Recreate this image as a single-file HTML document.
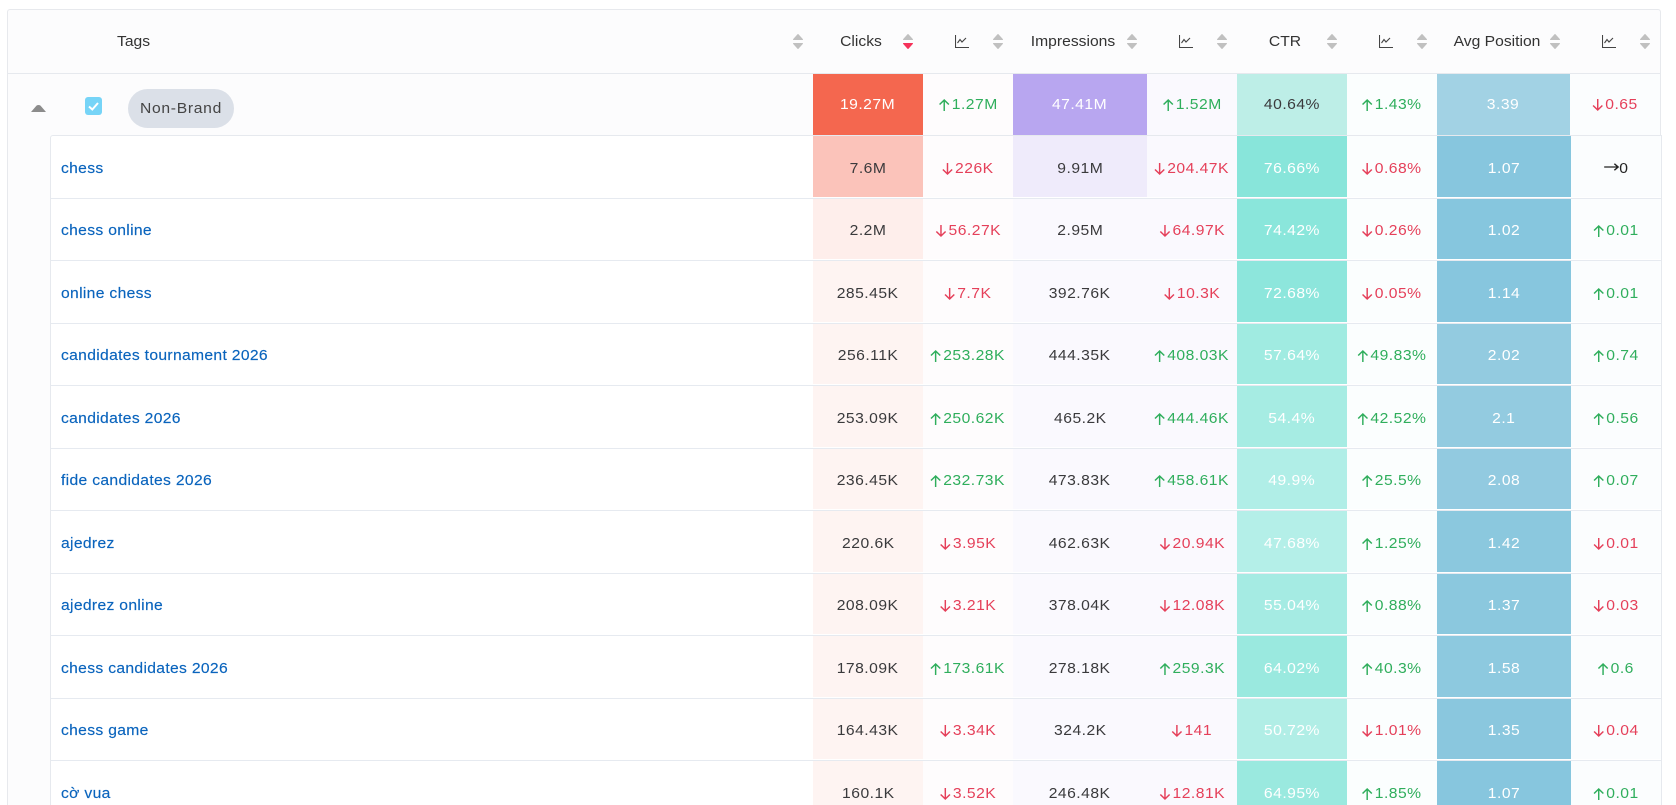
<!DOCTYPE html>
<html lang="en"><head><meta charset="utf-8"><title>Tags table</title>
<style>
html,body{margin:0;padding:0;background:#fff;width:1676px;height:805px;overflow:hidden}
body{position:relative;font-family:"Liberation Sans",sans-serif;font-size:14.5px;color:#3a3a3c}
.abs,.hd,.r,.c{position:absolute}
#wrap{left:7px;top:9px;width:1652px;height:795px;border:1px solid #e7e9ed;border-bottom:0;border-radius:3px 3px 0 0;background:#fcfcfd;box-sizing:content-box}
.hl{left:8px;top:73px;width:1652px;height:1px;background:#e6e9ee}
.hd{top:31px;height:22px;line-height:22px;color:#333;transform:translateX(-50%) scaleX(1.08);white-space:nowrap}
.so,.ch{position:absolute}
.so path{stroke-linejoin:round;stroke-width:1}
.c{top:0;bottom:1px;display:flex;align-items:center;justify-content:center;white-space:nowrap}
.t{display:inline-flex;align-items:center;letter-spacing:.45px;transform:scaleX(1.08)}
.r .t{transform:translateY(2px) scaleX(1.08)}
.w{color:#fff}.g{color:#2fae5c}.e{color:#e5405a}
.t svg{margin-right:2px;fill:none;stroke:currentColor;stroke-width:1.35;flex:none}
.c1{left:763px;width:110px}.c2{left:873px;width:90px;background:#fefcfd}.c3{left:963px;width:134px}.c4{left:1097px;width:90px;background:#faf9fe}
.c5{left:1187px;width:110px}.c6{left:1297px;width:90px;background:#fbfefe}.c7{left:1387px;width:134px}.c8{left:1521px;width:90px;background:#fbfdfe}
#inner{left:50px;top:135px;width:1612px;height:670px;background:#fff;border:1px solid #e6e9ee;border-bottom:0;border-radius:3px 0 0 0;box-sizing:border-box;overflow:hidden}
.r{left:-1px;width:1612px;border-bottom:1px solid #e6eaf0;box-sizing:border-box}
.l{position:absolute;left:11px;top:0;bottom:1px;display:flex;align-items:center;color:#0a64bd;letter-spacing:.3px;transform:translateY(2px) scaleX(1.08);transform-origin:left center;-webkit-text-stroke:.15px #0a64bd;white-space:nowrap}
#gr{left:50px;top:74px;width:1611px;height:61px}
#gr .c{bottom:0}
</style></head><body>
<div class="abs" id="wrap"></div>
<div class="abs hl"></div>

<div class="hd" style="left:117px;transform:scaleX(1.08);transform-origin:left center">Tags</div>
<div class="hd" style="left:861px">Clicks</div>
<div class="hd" style="left:1073px">Impressions</div>
<div class="hd" style="left:1285px">CTR</div>
<div class="hd" style="left:1497px">Avg Position</div>

<svg class="so" style="left:793px;top:33px" width="10" height="17" viewBox="0 0 10 17"><path fill="#c0c0c0" stroke="#c0c0c0" d="M5 1.500 9.500 6.500H.5zM.5 10.500H9.500L5 15.500z"/></svg>
<svg class="so" style="left:903px;top:33px" width="10" height="17" viewBox="0 0 10 17"><path fill="#c0c0c0" stroke="#c0c0c0" d="M5 1.500 9.500 6.500H.5z"/><path fill="#f5325a" stroke="#f5325a" d="M.5 10.500H9.500L5 15.500z"/></svg>
<svg class="so" style="left:993px;top:33px" width="10" height="17" viewBox="0 0 10 17"><path fill="#c0c0c0" stroke="#c0c0c0" d="M5 1.500 9.500 6.500H.5zM.5 10.500H9.500L5 15.500z"/></svg>
<svg class="so" style="left:1127px;top:33px" width="10" height="17" viewBox="0 0 10 17"><path fill="#c0c0c0" stroke="#c0c0c0" d="M5 1.500 9.500 6.500H.5zM.5 10.500H9.500L5 15.500z"/></svg>
<svg class="so" style="left:1217px;top:33px" width="10" height="17" viewBox="0 0 10 17"><path fill="#c0c0c0" stroke="#c0c0c0" d="M5 1.500 9.500 6.500H.5zM.5 10.500H9.500L5 15.500z"/></svg>
<svg class="so" style="left:1327px;top:33px" width="10" height="17" viewBox="0 0 10 17"><path fill="#c0c0c0" stroke="#c0c0c0" d="M5 1.500 9.500 6.500H.5zM.5 10.500H9.500L5 15.500z"/></svg>
<svg class="so" style="left:1417px;top:33px" width="10" height="17" viewBox="0 0 10 17"><path fill="#c0c0c0" stroke="#c0c0c0" d="M5 1.500 9.500 6.500H.5zM.5 10.500H9.500L5 15.500z"/></svg>
<svg class="so" style="left:1550px;top:33px" width="10" height="17" viewBox="0 0 10 17"><path fill="#c0c0c0" stroke="#c0c0c0" d="M5 1.500 9.500 6.500H.5zM.5 10.500H9.500L5 15.500z"/></svg>
<svg class="so" style="left:1640px;top:33px" width="10" height="17" viewBox="0 0 10 17"><path fill="#c0c0c0" stroke="#c0c0c0" d="M5 1.500 9.500 6.500H.5zM.5 10.500H9.500L5 15.500z"/></svg>

<svg class="ch" style="left:955px;top:35px" width="14" height="13" viewBox="0 0 14 13" fill="none" stroke="#444" stroke-width="1.1"><path d="M.5 0V12.500H14M2.500 8 5 4.500 7 7 11 3"/></svg>
<svg class="ch" style="left:1179px;top:35px" width="14" height="13" viewBox="0 0 14 13" fill="none" stroke="#444" stroke-width="1.1"><path d="M.5 0V12.500H14M2.500 8 5 4.500 7 7 11 3"/></svg>
<svg class="ch" style="left:1379px;top:35px" width="14" height="13" viewBox="0 0 14 13" fill="none" stroke="#444" stroke-width="1.1"><path d="M.5 0V12.500H14M2.500 8 5 4.500 7 7 11 3"/></svg>
<svg class="ch" style="left:1602px;top:35px" width="14" height="13" viewBox="0 0 14 13" fill="none" stroke="#444" stroke-width="1.1"><path d="M.5 0V12.500H14M2.500 8 5 4.500 7 7 11 3"/></svg>

<svg class="abs" style="left:31px;top:105px" width="15" height="7" viewBox="0 0 15 7"><path fill="#8c8c8c" d="M5.500 .6Q7.500-.6 9.500 .6L15 7H0z"/></svg>
<div class="abs" style="left:85px;top:97px;width:17px;height:18px;background:#76d4f7;border-radius:3px"></div>
<svg class="abs" style="left:85px;top:97px" width="17" height="18" viewBox="0 0 17 18" fill="none" stroke="#fff" stroke-width="2"><path d="M4 9.500 7.300 12.500 13 6"/></svg>
<div class="abs" style="left:128px;top:89px;width:106px;height:39px;border-radius:20px;background:#dbe0e8;display:flex;align-items:center;justify-content:center;color:#444"><span class="t" style="letter-spacing:.65px">Non-Brand</span></div>

<div class="abs" id="gr">
<div class="c c1 w" style="background:#f4674f"><span class="t">19.27M</span></div>
<div class="c c2 g"><span class="t"><svg width="10" height="12" viewBox="0 0 10 12"><path d="M5 12V1M.7 5.500 5 1l4.300 4.500"/></svg>1.27M</span></div>
<div class="c c3 w" style="background:#b8a6f0"><span class="t">47.41M</span></div>
<div class="c c4 g"><span class="t"><svg width="10" height="12" viewBox="0 0 10 12"><path d="M5 12V1M.7 5.500 5 1l4.300 4.500"/></svg>1.52M</span></div>
<div class="c c5" style="background:#bdeee7"><span class="t">40.64%</span></div>
<div class="c c6 g"><span class="t"><svg width="10" height="12" viewBox="0 0 10 12"><path d="M5 12V1M.7 5.500 5 1l4.300 4.500"/></svg>1.43%</span></div>
<div class="c c7 w" style="background:#a2d2e4;width:133px"><span class="t">3.39</span></div>
<div class="c c8 e" style="left:1520px"><span class="t"><svg width="10" height="12" viewBox="0 0 10 12"><path d="M5 0V11M.7 6.500 5 11l4.300-4.500"/></svg>0.65</span></div>
</div>

<div class="abs" id="inner">

<div class="r" style="top:0;height:63px"><div class="l">chess</div>
<div class="c c1" style="background:#fbc3ba"><span class="t">7.6M</span></div>
<div class="c c2 e"><span class="t"><svg width="10" height="12" viewBox="0 0 10 12"><path d="M5 0V11M.7 6.500 5 11l4.300-4.500"/></svg>226K</span></div>
<div class="c c3" style="background:#efebfb"><span class="t">9.91M</span></div>
<div class="c c4 e"><span class="t"><svg width="10" height="12" viewBox="0 0 10 12"><path d="M5 0V11M.7 6.500 5 11l4.300-4.500"/></svg>204.47K</span></div>
<div class="c c5 w" style="background:#88e5da"><span class="t">76.66%</span></div>
<div class="c c6 e"><span class="t"><svg width="10" height="12" viewBox="0 0 10 12"><path d="M5 0V11M.7 6.500 5 11l4.300-4.500"/></svg>0.68%</span></div>
<div class="c c7 w" style="background:#87c6de"><span class="t">1.07</span></div>
<div class="c c8" style="color:#222"><span class="t"><svg width="14" height="12" viewBox="0 0 14 12" style="margin-right:0;margin-top:-3px"><path d="M0 6H13M9.500 2.800 13 6l-3.500 3.200"/></svg>0</span></div>
</div>

<div class="r" style="top:63px;height:62px"><div class="l">chess online</div>
<div class="c c1" style="background:#feeeeb"><span class="t">2.2M</span></div>
<div class="c c2 e"><span class="t"><svg width="10" height="12" viewBox="0 0 10 12"><path d="M5 0V11M.7 6.500 5 11l4.300-4.500"/></svg>56.27K</span></div>
<div class="c c3" style="background:#faf9fe"><span class="t">2.95M</span></div>
<div class="c c4 e"><span class="t"><svg width="10" height="12" viewBox="0 0 10 12"><path d="M5 0V11M.7 6.500 5 11l4.300-4.500"/></svg>64.97K</span></div>
<div class="c c5 w" style="background:#8ae6db"><span class="t">74.42%</span></div>
<div class="c c6 e"><span class="t"><svg width="10" height="12" viewBox="0 0 10 12"><path d="M5 0V11M.7 6.500 5 11l4.300-4.500"/></svg>0.26%</span></div>
<div class="c c7 w" style="background:#86c6de"><span class="t">1.02</span></div>
<div class="c c8 g"><span class="t"><svg width="10" height="12" viewBox="0 0 10 12"><path d="M5 12V1M.7 5.500 5 1l4.300 4.500"/></svg>0.01</span></div>
</div>

<div class="r" style="top:125px;height:63px"><div class="l">online chess</div>
<div class="c c1" style="background:#fef4f2"><span class="t">285.45K</span></div>
<div class="c c2 e"><span class="t"><svg width="10" height="12" viewBox="0 0 10 12"><path d="M5 0V11M.7 6.500 5 11l4.300-4.500"/></svg>7.7K</span></div>
<div class="c c3" style="background:#faf9fe"><span class="t">392.76K</span></div>
<div class="c c4 e"><span class="t"><svg width="10" height="12" viewBox="0 0 10 12"><path d="M5 0V11M.7 6.500 5 11l4.300-4.500"/></svg>10.3K</span></div>
<div class="c c5 w" style="background:#8de6dc"><span class="t">72.68%</span></div>
<div class="c c6 e"><span class="t"><svg width="10" height="12" viewBox="0 0 10 12"><path d="M5 0V11M.7 6.500 5 11l4.300-4.500"/></svg>0.05%</span></div>
<div class="c c7 w" style="background:#87c6de"><span class="t">1.14</span></div>
<div class="c c8 g"><span class="t"><svg width="10" height="12" viewBox="0 0 10 12"><path d="M5 12V1M.7 5.500 5 1l4.300 4.500"/></svg>0.01</span></div>
</div>

<div class="r" style="top:188px;height:62px"><div class="l">candidates tournament 2026</div>
<div class="c c1" style="background:#fef4f2"><span class="t">256.11K</span></div>
<div class="c c2 g"><span class="t"><svg width="10" height="12" viewBox="0 0 10 12"><path d="M5 12V1M.7 5.500 5 1l4.300 4.500"/></svg>253.28K</span></div>
<div class="c c3" style="background:#faf9fe"><span class="t">444.35K</span></div>
<div class="c c4 g"><span class="t"><svg width="10" height="12" viewBox="0 0 10 12"><path d="M5 12V1M.7 5.500 5 1l4.300 4.500"/></svg>408.03K</span></div>
<div class="c c5 w" style="background:#a0ebe1"><span class="t">57.64%</span></div>
<div class="c c6 g"><span class="t"><svg width="10" height="12" viewBox="0 0 10 12"><path d="M5 12V1M.7 5.500 5 1l4.300 4.500"/></svg>49.83%</span></div>
<div class="c c7 w" style="background:#93cbe0"><span class="t">2.02</span></div>
<div class="c c8 g"><span class="t"><svg width="10" height="12" viewBox="0 0 10 12"><path d="M5 12V1M.7 5.500 5 1l4.300 4.500"/></svg>0.74</span></div>
</div>

<div class="r" style="top:250px;height:63px"><div class="l">candidates 2026</div>
<div class="c c1" style="background:#fef4f2"><span class="t">253.09K</span></div>
<div class="c c2 g"><span class="t"><svg width="10" height="12" viewBox="0 0 10 12"><path d="M5 12V1M.7 5.500 5 1l4.300 4.500"/></svg>250.62K</span></div>
<div class="c c3" style="background:#faf9fe"><span class="t">465.2K</span></div>
<div class="c c4 g"><span class="t"><svg width="10" height="12" viewBox="0 0 10 12"><path d="M5 12V1M.7 5.500 5 1l4.300 4.500"/></svg>444.46K</span></div>
<div class="c c5 w" style="background:#a6ece3"><span class="t">54.4%</span></div>
<div class="c c6 g"><span class="t"><svg width="10" height="12" viewBox="0 0 10 12"><path d="M5 12V1M.7 5.500 5 1l4.300 4.500"/></svg>42.52%</span></div>
<div class="c c7 w" style="background:#93cbe0"><span class="t">2.1</span></div>
<div class="c c8 g"><span class="t"><svg width="10" height="12" viewBox="0 0 10 12"><path d="M5 12V1M.7 5.500 5 1l4.300 4.500"/></svg>0.56</span></div>
</div>

<div class="r" style="top:313px;height:62px"><div class="l">fide candidates 2026</div>
<div class="c c1" style="background:#fef4f2"><span class="t">236.45K</span></div>
<div class="c c2 g"><span class="t"><svg width="10" height="12" viewBox="0 0 10 12"><path d="M5 12V1M.7 5.500 5 1l4.300 4.500"/></svg>232.73K</span></div>
<div class="c c3" style="background:#faf9fe"><span class="t">473.83K</span></div>
<div class="c c4 g"><span class="t"><svg width="10" height="12" viewBox="0 0 10 12"><path d="M5 12V1M.7 5.500 5 1l4.300 4.500"/></svg>458.61K</span></div>
<div class="c c5 w" style="background:#b0eee7"><span class="t">49.9%</span></div>
<div class="c c6 g"><span class="t"><svg width="10" height="12" viewBox="0 0 10 12"><path d="M5 12V1M.7 5.500 5 1l4.300 4.500"/></svg>25.5%</span></div>
<div class="c c7 w" style="background:#92cae0"><span class="t">2.08</span></div>
<div class="c c8 g"><span class="t"><svg width="10" height="12" viewBox="0 0 10 12"><path d="M5 12V1M.7 5.500 5 1l4.300 4.500"/></svg>0.07</span></div>
</div>

<div class="r" style="top:375px;height:63px"><div class="l">ajedrez</div>
<div class="c c1" style="background:#fef4f2"><span class="t">220.6K</span></div>
<div class="c c2 e"><span class="t"><svg width="10" height="12" viewBox="0 0 10 12"><path d="M5 0V11M.7 6.500 5 11l4.300-4.500"/></svg>3.95K</span></div>
<div class="c c3" style="background:#faf9fe"><span class="t">462.63K</span></div>
<div class="c c4 e"><span class="t"><svg width="10" height="12" viewBox="0 0 10 12"><path d="M5 0V11M.7 6.500 5 11l4.300-4.500"/></svg>20.94K</span></div>
<div class="c c5 w" style="background:#b4efe8"><span class="t">47.68%</span></div>
<div class="c c6 g"><span class="t"><svg width="10" height="12" viewBox="0 0 10 12"><path d="M5 12V1M.7 5.500 5 1l4.300 4.500"/></svg>1.25%</span></div>
<div class="c c7 w" style="background:#8bc8de"><span class="t">1.42</span></div>
<div class="c c8 e"><span class="t"><svg width="10" height="12" viewBox="0 0 10 12"><path d="M5 0V11M.7 6.500 5 11l4.300-4.500"/></svg>0.01</span></div>
</div>

<div class="r" style="top:438px;height:62px"><div class="l">ajedrez online</div>
<div class="c c1" style="background:#fef4f2"><span class="t">208.09K</span></div>
<div class="c c2 e"><span class="t"><svg width="10" height="12" viewBox="0 0 10 12"><path d="M5 0V11M.7 6.500 5 11l4.300-4.500"/></svg>3.21K</span></div>
<div class="c c3" style="background:#faf9fe"><span class="t">378.04K</span></div>
<div class="c c4 e"><span class="t"><svg width="10" height="12" viewBox="0 0 10 12"><path d="M5 0V11M.7 6.500 5 11l4.300-4.500"/></svg>12.08K</span></div>
<div class="c c5 w" style="background:#a5ebe3"><span class="t">55.04%</span></div>
<div class="c c6 g"><span class="t"><svg width="10" height="12" viewBox="0 0 10 12"><path d="M5 12V1M.7 5.500 5 1l4.300 4.500"/></svg>0.88%</span></div>
<div class="c c7 w" style="background:#8bc8de"><span class="t">1.37</span></div>
<div class="c c8 e"><span class="t"><svg width="10" height="12" viewBox="0 0 10 12"><path d="M5 0V11M.7 6.500 5 11l4.300-4.500"/></svg>0.03</span></div>
</div>

<div class="r" style="top:500px;height:63px"><div class="l">chess candidates 2026</div>
<div class="c c1" style="background:#fef4f2"><span class="t">178.09K</span></div>
<div class="c c2 g"><span class="t"><svg width="10" height="12" viewBox="0 0 10 12"><path d="M5 12V1M.7 5.500 5 1l4.300 4.500"/></svg>173.61K</span></div>
<div class="c c3" style="background:#faf9fe"><span class="t">278.18K</span></div>
<div class="c c4 g"><span class="t"><svg width="10" height="12" viewBox="0 0 10 12"><path d="M5 12V1M.7 5.500 5 1l4.300 4.500"/></svg>259.3K</span></div>
<div class="c c5 w" style="background:#9ae9df"><span class="t">64.02%</span></div>
<div class="c c6 g"><span class="t"><svg width="10" height="12" viewBox="0 0 10 12"><path d="M5 12V1M.7 5.500 5 1l4.300 4.500"/></svg>40.3%</span></div>
<div class="c c7 w" style="background:#8dc9df"><span class="t">1.58</span></div>
<div class="c c8 g"><span class="t"><svg width="10" height="12" viewBox="0 0 10 12"><path d="M5 12V1M.7 5.500 5 1l4.300 4.500"/></svg>0.6</span></div>
</div>

<div class="r" style="top:563px;height:62px"><div class="l">chess game</div>
<div class="c c1" style="background:#fef4f2"><span class="t">164.43K</span></div>
<div class="c c2 e"><span class="t"><svg width="10" height="12" viewBox="0 0 10 12"><path d="M5 0V11M.7 6.500 5 11l4.300-4.500"/></svg>3.34K</span></div>
<div class="c c3" style="background:#faf9fe"><span class="t">324.2K</span></div>
<div class="c c4 e"><span class="t"><svg width="10" height="12" viewBox="0 0 10 12"><path d="M5 0V11M.7 6.500 5 11l4.300-4.500"/></svg>141</span></div>
<div class="c c5 w" style="background:#b1eee6"><span class="t">50.72%</span></div>
<div class="c c6 e"><span class="t"><svg width="10" height="12" viewBox="0 0 10 12"><path d="M5 0V11M.7 6.500 5 11l4.300-4.500"/></svg>1.01%</span></div>
<div class="c c7 w" style="background:#8ac7de"><span class="t">1.35</span></div>
<div class="c c8 e"><span class="t"><svg width="10" height="12" viewBox="0 0 10 12"><path d="M5 0V11M.7 6.500 5 11l4.300-4.500"/></svg>0.04</span></div>
</div>

<div class="r" style="top:625px;height:63px"><div class="l">cờ vua</div>
<div class="c c1" style="background:#fef4f2"><span class="t">160.1K</span></div>
<div class="c c2 e"><span class="t"><svg width="10" height="12" viewBox="0 0 10 12"><path d="M5 0V11M.7 6.500 5 11l4.300-4.500"/></svg>3.52K</span></div>
<div class="c c3" style="background:#faf9fe"><span class="t">246.48K</span></div>
<div class="c c4 e"><span class="t"><svg width="10" height="12" viewBox="0 0 10 12"><path d="M5 0V11M.7 6.500 5 11l4.300-4.500"/></svg>12.81K</span></div>
<div class="c c5 w" style="background:#9ae9df"><span class="t">64.95%</span></div>
<div class="c c6 g"><span class="t"><svg width="10" height="12" viewBox="0 0 10 12"><path d="M5 12V1M.7 5.500 5 1l4.300 4.500"/></svg>1.85%</span></div>
<div class="c c7 w" style="background:#87c6de"><span class="t">1.07</span></div>
<div class="c c8 g"><span class="t"><svg width="10" height="12" viewBox="0 0 10 12"><path d="M5 12V1M.7 5.500 5 1l4.300 4.500"/></svg>0.01</span></div>
</div>

</div>
</body></html>
